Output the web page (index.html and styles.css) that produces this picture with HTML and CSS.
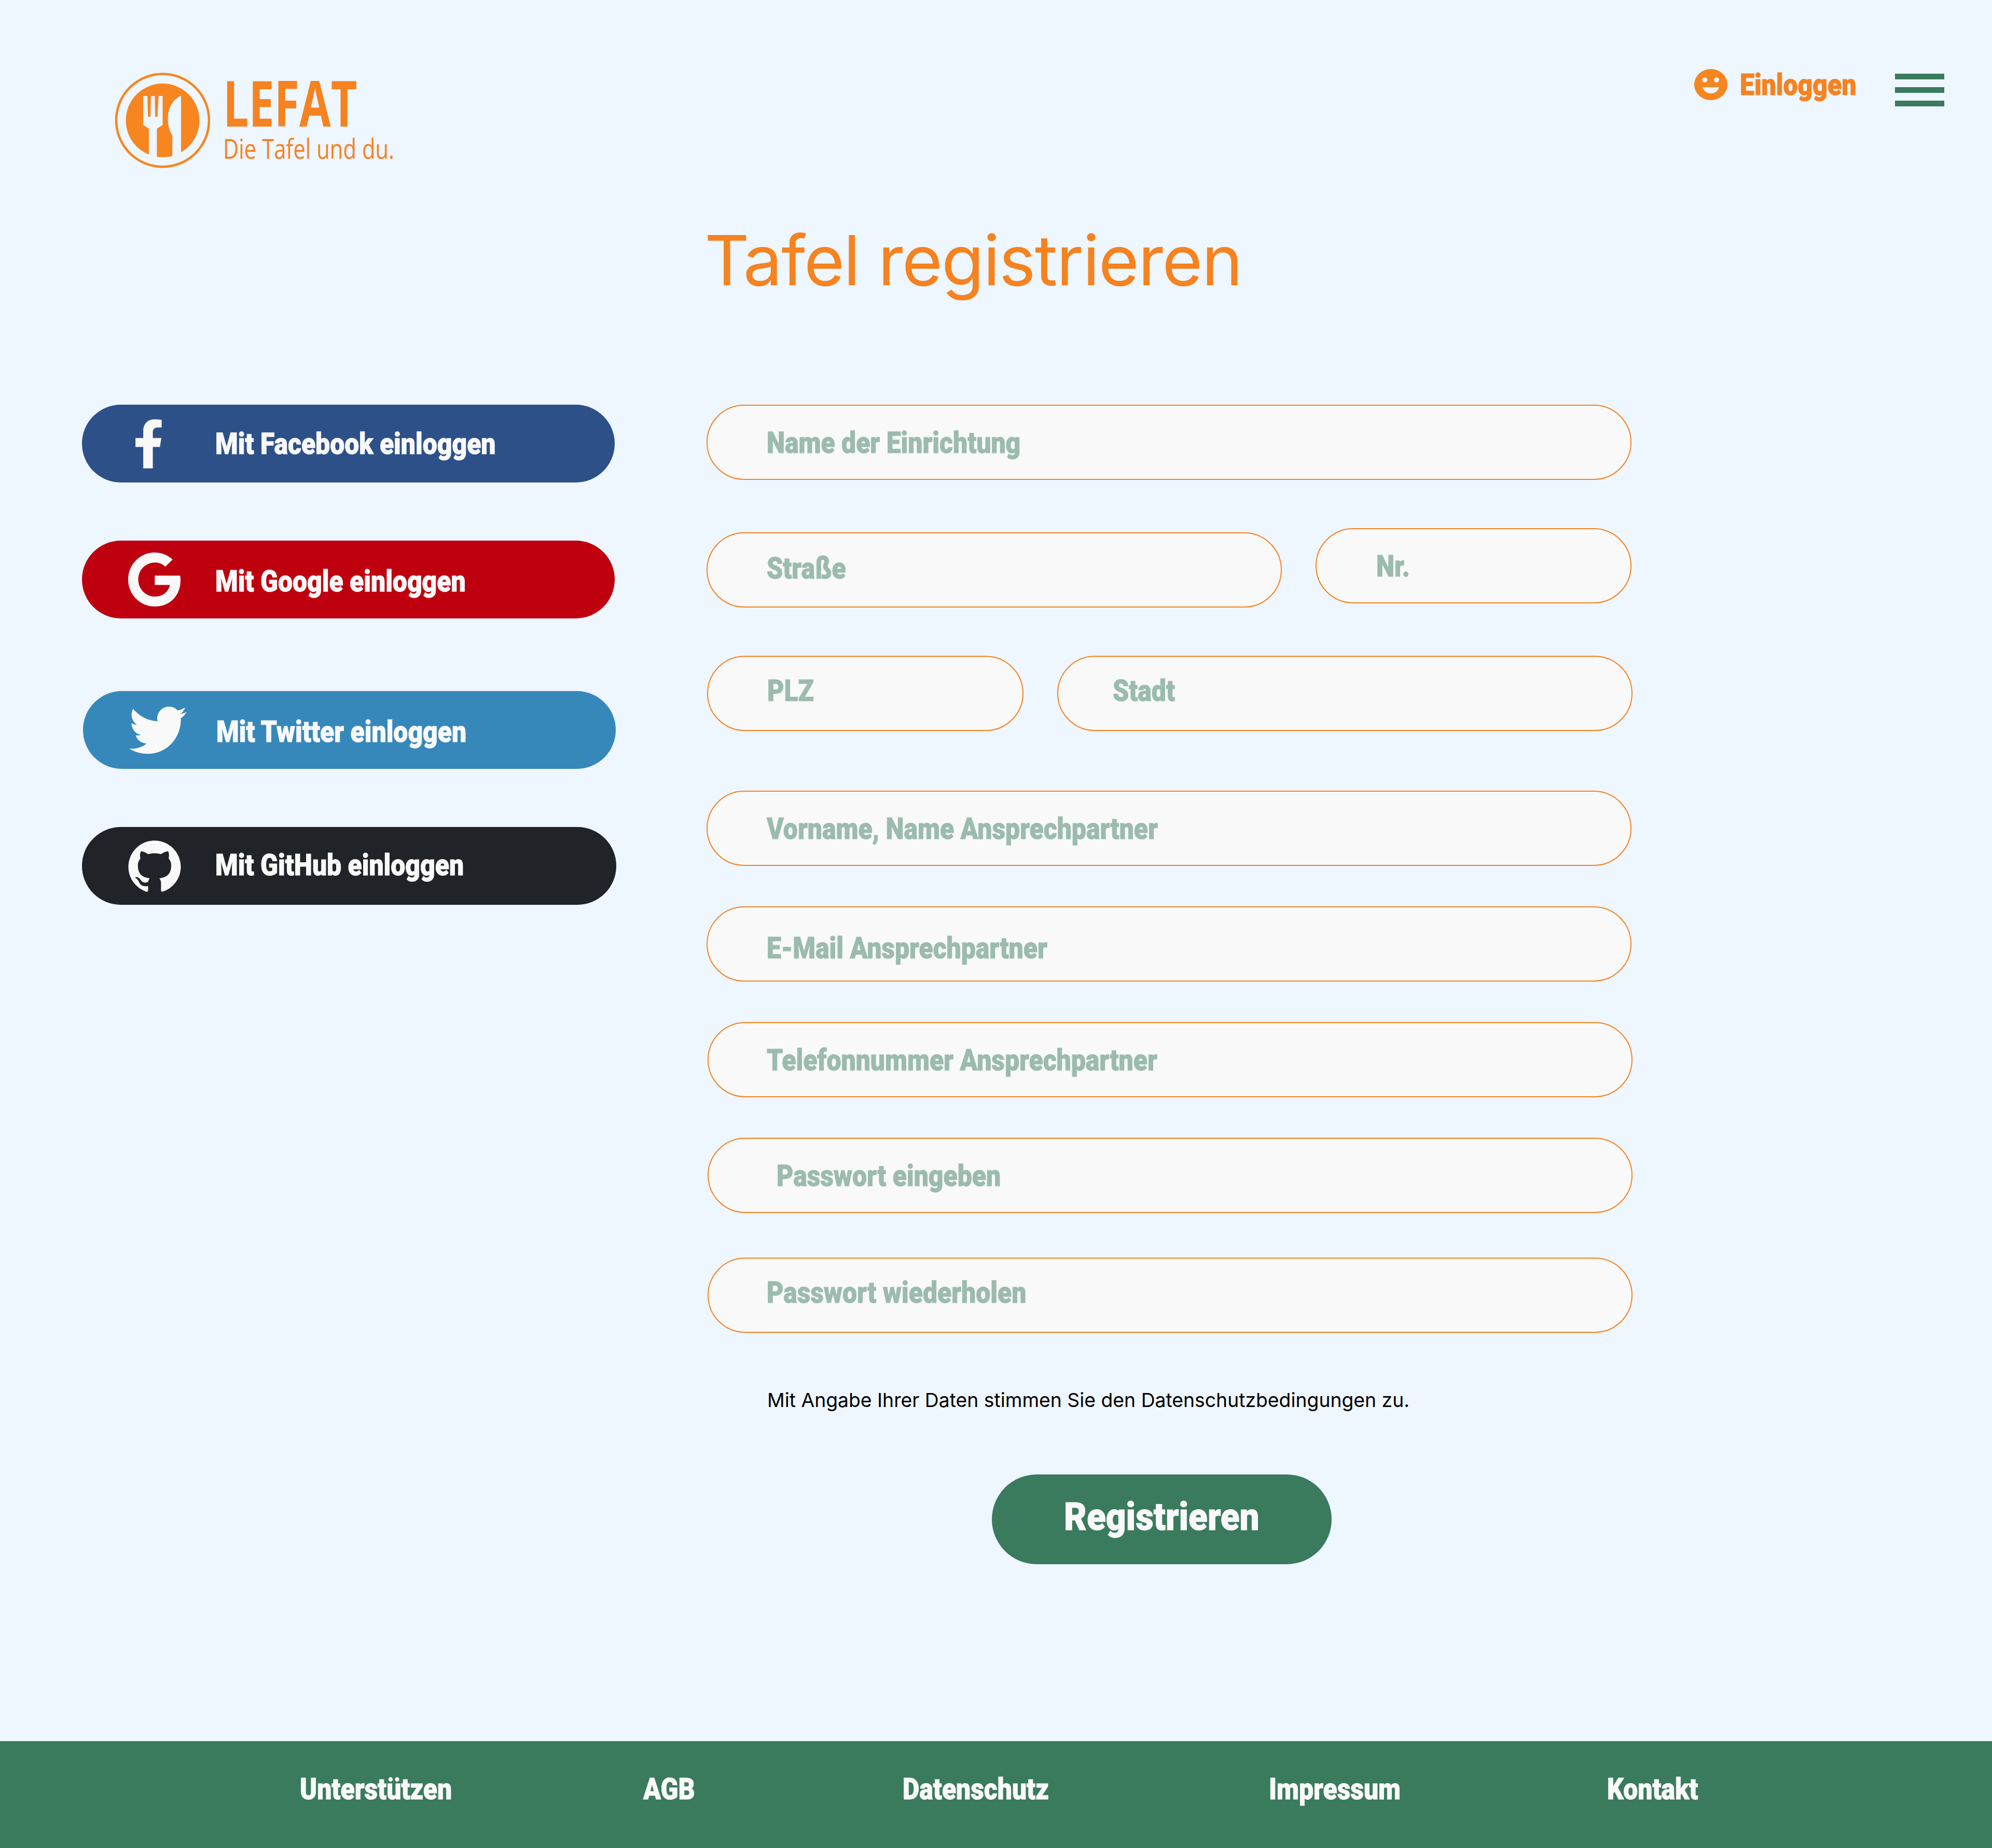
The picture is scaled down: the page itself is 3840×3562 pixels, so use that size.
FILE: index.html
```html
<!DOCTYPE html>
<html lang="de">
<head>
    <meta charset="UTF-8">
    <meta name="viewport" content="width=device-width, initial-scale=1.0">
    <title>LEFAT - Tafel registrieren</title>
    <link rel="stylesheet" href="styles.css">
</head>
<body>
    <div class="page">
        <!-- Header -->
        <header class="site-header">
            <a class="logo" href="#">
                <svg class="logo-mark" viewBox="0 0 183 184">
                    <circle cx="91.5" cy="92" r="89.5" fill="none" stroke="#f78520" stroke-width="4.5"/>
                    <circle cx="91.5" cy="92" r="71" fill="#f78520"/>
                    <path fill="#eef6ff" d="M54 45H62.1L63.3 85H68.2L69 45H76.4L77.2 85H81.7L83.7 45H91.5V101L80.4 108V166H65V108L54 101Z"/>
                    <path fill="#eef6ff" d="M125.3 45H127V166H110.2V120.7C104 112 101.7 100 101.7 88C101.7 68 111 53 125.3 45Z"/>
                </svg>
                <div class="logo-text">
                    <span class="logo-name">LEFAT</span>
                    <span class="logo-claim">Die Tafel und du.</span>
                </div>
            </a>
            <div class="header-actions">
                <a class="login-link" href="#">
                    <svg class="smiley" viewBox="0 0 64 62">
                        <ellipse cx="32" cy="31" rx="32" ry="30" fill="#f78520"/>
                        <circle cx="20.5" cy="22" r="4.8" fill="#eef6ff"/>
                        <circle cx="43" cy="22" r="4.8" fill="#eef6ff"/>
                        <path fill="#eef6ff" d="M16 36H48C46 43 40 48 32 48S18 43 16 36Z"/>
                    </svg>
                    <span class="cond">Einloggen</span>
                </a>
                <div class="burger">
                    <span></span>
                    <span></span>
                    <span></span>
                </div>
            </div>
        </header>

        <main class="register">
            <h1 class="page-title">Tafel registrieren</h1>

            <!-- Social logins -->
            <aside class="social-logins">
                <a class="social-btn facebook" href="#">
                    <span class="social-icon">
                        <svg width="51" height="95" viewBox="22 0 277 512"><path d="M279.14 288l14.22-92.66h-88.91v-60.13c0-25.35 12.42-50.06 52.24-50.06h40.42V6.26S260.43 0 225.36 0c-73.22 0-121.08 44.38-121.08 124.72v70.62H22.89V288h81.39v224h100.17V288z"/></svg>
                    </span>
                    <span class="cond">Mit Facebook einloggen</span>
                </a>
                <a class="social-btn google" href="#">
                    <span class="social-icon">
                        <svg width="101" height="104" viewBox="0 8 488 496" preserveAspectRatio="none"><path d="M488 261.8C488 403.3 391.1 504 248 504 110.8 504 0 393.2 0 256S110.8 8 248 8c66.8 0 123 24.5 166.3 64.9l-67.5 64.9C258.5 52.6 94.3 116.6 94.3 256c0 86.5 69.1 156.6 153.7 156.6 98.2 0 135-70.4 140.8-106.9H248v-85.3h236.1c2.3 12.7 3.9 24.9 3.9 41.4z"/></svg>
                    </span>
                    <span class="cond">Mit Google einloggen</span>
                </a>
                <a class="social-btn twitter" href="#">
                    <span class="social-icon">
                        <svg width="111" height="91" viewBox="0 48 512 416" preserveAspectRatio="none"><path d="M459.37 151.716c.325 4.548.325 9.097.325 13.645 0 138.72-105.583 298.558-298.558 298.558-59.452 0-114.68-17.219-161.137-47.106 8.447.974 16.568 1.299 25.34 1.299 49.055 0 94.213-16.568 130.274-44.832-46.132-.975-84.792-31.188-98.112-72.772 6.498.974 12.995 1.624 19.818 1.624 9.421 0 18.843-1.3 27.614-3.573-48.081-9.747-84.143-51.98-84.143-102.985v-1.299c13.969 7.797 30.214 12.67 47.431 13.319-28.264-18.843-46.781-51.005-46.781-87.391 0-19.492 5.197-37.36 14.294-52.954 51.655 63.675 129.3 105.258 216.365 109.807-1.624-7.797-2.599-15.918-2.599-24.04 0-57.828 46.782-104.934 104.934-104.934 30.213 0 57.502 12.67 76.67 33.137 23.715-4.548 46.456-13.645 66.599-25.665-7.798 24.366-24.366 44.833-45.157 57.503 20.142-2.273 39.3-7.798 59.442-16.569-13.969 20.792-31.188 39.31-50.981 53.304z"/></svg>
                    </span>
                    <span class="cond">Mit Twitter einloggen</span>
                </a>
                <a class="social-btn github" href="#">
                    <span class="social-icon">
                        <svg width="102" height="101" viewBox="0 0 24 24"><path d="M12 .297c-6.63 0-12 5.373-12 12 0 5.303 3.438 9.8 8.205 11.385.6.113.82-.258.82-.577 0-.285-.01-1.04-.015-2.04-3.338.724-4.042-1.61-4.042-1.61C4.422 18.07 3.633 17.7 3.633 17.7c-1.087-.744.084-.729.084-.729 1.205.084 1.838 1.236 1.838 1.236 1.07 1.835 2.809 1.305 3.495.998.108-.776.417-1.305.76-1.605-2.665-.3-5.466-1.332-5.466-5.93 0-1.31.465-2.38 1.235-3.22-.135-.303-.54-1.523.105-3.176 0 0 1.005-.322 3.3 1.23.96-.267 1.98-.399 3-.405 1.02.006 2.04.138 3 .405 2.28-1.552 3.285-1.23 3.285-1.23.645 1.653.24 2.873.12 3.176.765.84 1.23 1.91 1.23 3.22 0 4.61-2.805 5.625-5.475 5.92.42.36.81 1.096.81 2.22 0 1.606-.015 2.896-.015 3.286 0 .315.21.69.825.57C20.565 22.092 24 17.592 24 12.297c0-6.627-5.373-12-12-12"/></svg>
                    </span>
                    <span class="cond">Mit GitHub einloggen</span>
                </a>
            </aside>

            <!-- Form -->
            <form class="register-form">
                <div class="field field-name"><span class="cond">Name der Einrichtung</span></div>

                <div class="field-row row-street">
                    <div class="field field-street"><span class="cond">Straße</span></div>
                    <div class="field field-number"><span class="cond">Nr.</span></div>
                </div>

                <div class="field-row row-city">
                    <div class="field field-zip"><span class="cond">PLZ</span></div>
                    <div class="field field-city"><span class="cond">Stadt</span></div>
                </div>

                <div class="field field-contact"><span class="cond">Vorname, Name Ansprechpartner</span></div>
                <div class="field field-mail"><span class="cond">E-Mail Ansprechpartner</span></div>
                <div class="field field-phone"><span class="cond">Telefonnummer Ansprechpartner</span></div>
                <div class="field field-pass"><span class="cond">Passwort eingeben</span></div>
                <div class="field field-repeat"><span class="cond">Passwort wiederholen</span></div>

                <p class="privacy-note">Mit Angabe Ihrer Daten stimmen Sie den Datenschutzbedingungen zu.</p>

                <button class="submit-btn" type="button"><span class="cond">Registrieren</span></button>
            </form>
        </main>

        <!-- Footer -->
        <footer class="site-footer">
            <a href="#"><span class="cond">Unterstützen</span></a>
            <a href="#"><span class="cond">AGB</span></a>
            <a href="#"><span class="cond">Datenschutz</span></a>
            <a href="#"><span class="cond">Impressum</span></a>
            <a href="#"><span class="cond">Kontakt</span></a>
        </footer>
    </div>
</body>
</html>
```

FILE: styles.css
```css
:root {
    --bg: #eef6ff;
    --orange: #f68220;
    --green: #3a7a5d;
    --placeholder: #9bbbae;
    --light: #f9f9f9;
}

* {
    box-sizing: border-box;
}

body {
    margin: 0;
    background: var(--bg);
    font-family: 'Roboto', sans-serif;
}

a {
    color: inherit;
    text-decoration: none;
}

.page {
    display: flex;
    flex-direction: column;
    min-height: 3562px;
}

/* the design font is a heavy condensed face, squeeze Roboto Black to get near it */
.cond {
    display: inline-block;
    font-family: 'Roboto', sans-serif;
    font-weight: 900;
    font-size: 58px;
    white-space: nowrap;
    -webkit-text-stroke: 1px currentColor;
    transform: scaleX(0.86);
    transform-origin: left center;
}

/* Header */
.site-header {
    display: flex;
    justify-content: space-between;
    align-items: flex-start;
    height: 340px;
    padding: 132px 92px 0 222px;
}

.logo {
    display: flex;
    margin-top: 8px;
}

.logo-mark {
    width: 183px;
    height: 184px;
    flex: none;
}

.logo-text {
    margin-left: 25px;
    color: var(--orange);
    font-family: 'Open Sans', sans-serif;
}

.logo-name,
.logo-claim {
    display: block;
    white-space: nowrap;
    transform-origin: left center;
}

.logo-name {
    margin-top: 1px;
    font-size: 122px;
    font-weight: 700;
    line-height: 112px;
    transform: scaleX(0.72);
}

.logo-claim {
    margin-top: 3px;
    font-size: 53px;
    line-height: 60px;
    transform: scaleX(0.788);
}

.header-actions {
    display: flex;
    align-items: flex-start;
}

.login-link {
    display: flex;
    align-items: center;
    width: 387px;
    height: 62px;
    color: var(--orange);
}

.smiley {
    width: 64px;
    height: 62px;
    flex: none;
    margin-right: 24px;
}

.burger {
    display: flex;
    flex-direction: column;
    gap: 15px;
    width: 95px;
    margin-top: 10px;
}

.burger span {
    height: 11px;
    background: var(--green);
}

/* Main */
.register {
    display: grid;
    grid-template-columns: 1030px 1790px;
    column-gap: 174px;
    padding-left: 158px;
}

.page-title {
    grid-column: 2;
    margin: 94px 0 212px -4px;
    color: var(--orange);
    font-family: 'Inter', sans-serif;
    font-size: 134px;
    font-weight: 400;
    letter-spacing: -1.9px;
    line-height: 1;
    white-space: nowrap;
}

.social-logins {
    grid-column: 1;
}

.social-btn {
    display: flex;
    align-items: center;
    width: 1027px;
    height: 150px;
    border-radius: 75px;
    color: var(--light);
}

.social-icon {
    display: flex;
    flex: none;
    width: 168px;
    margin-left: 89px;
}

.social-icon svg {
    fill: var(--light);
}

.facebook {
    background: #2d5089;
}

.facebook .social-icon svg {
    margin-left: 14px;
}

.google {
    margin-top: 112px;
    background: #bf000f;
}

.google .cond,
.twitter .cond {
    margin-top: 6px;
}

.twitter {
    margin-top: 140px;
    margin-left: 2px;
    background: #3688bb;
}

.github {
    width: 1030px;
    margin-top: 112px;
    background: #202328;
}

.github .cond {
    margin-bottom: 5px;
}

/* Form */
.register-form {
    grid-column: 2;
}

.field {
    display: flex;
    align-items: center;
    width: 1783px;
    height: 145px;
    padding-left: 114px;
    border: 2px solid var(--orange);
    border-radius: 73px;
    background: var(--light);
    color: var(--placeholder);
}

.field-row {
    display: flex;
    align-items: flex-start;
}

.row-street {
    gap: 65px;
    margin-top: 93px;
}

.field-street {
    width: 1109px;
    margin-top: 8px;
    padding-bottom: 7px;
}

.field-number {
    width: 609px;
    padding-left: 115px;
}

.row-city {
    gap: 65px;
    margin-top: 93px;
    margin-left: 1px;
}

.field-zip {
    width: 610px;
    padding-bottom: 11px;
}

.field-city {
    width: 1109px;
    padding-left: 105px;
    padding-bottom: 11px;
}

.field-contact {
    margin-top: 115px;
}

.field-mail {
    margin-top: 78px;
    padding-top: 15px;
}

.field-phone {
    margin-top: 78px;
    margin-left: 2px;
    padding-left: 112px;
}

.field-pass {
    margin-top: 78px;
    margin-left: 2px;
    padding-left: 131px;
}

.field-repeat {
    margin-top: 86px;
    margin-left: 2px;
    padding-left: 112px;
    padding-bottom: 12px;
}

.privacy-note {
    margin: 105px 0 0 117px;
    color: #000;
    font-family: 'Inter', sans-serif;
    font-size: 37.3px;
    line-height: 50px;
    white-space: nowrap;
}

.submit-btn {
    display: flex;
    align-items: center;
    justify-content: center;
    width: 655px;
    height: 173px;
    margin: 118px 0 0 550px;
    padding: 0 0 12px;
    border: none;
    border-radius: 87px;
    background: var(--green);
    color: var(--light);
}

.submit-btn .cond {
    font-size: 75px;
    transform: scaleX(0.9);
    transform-origin: center;
}

/* Footer */
.site-footer {
    display: grid;
    grid-template-columns: 662px 500px 706px 652px auto;
    align-items: center;
    height: 206px;
    margin-top: auto;
    padding: 0 0 22px 578px;
    background: var(--green);
    color: var(--light);
}
```
